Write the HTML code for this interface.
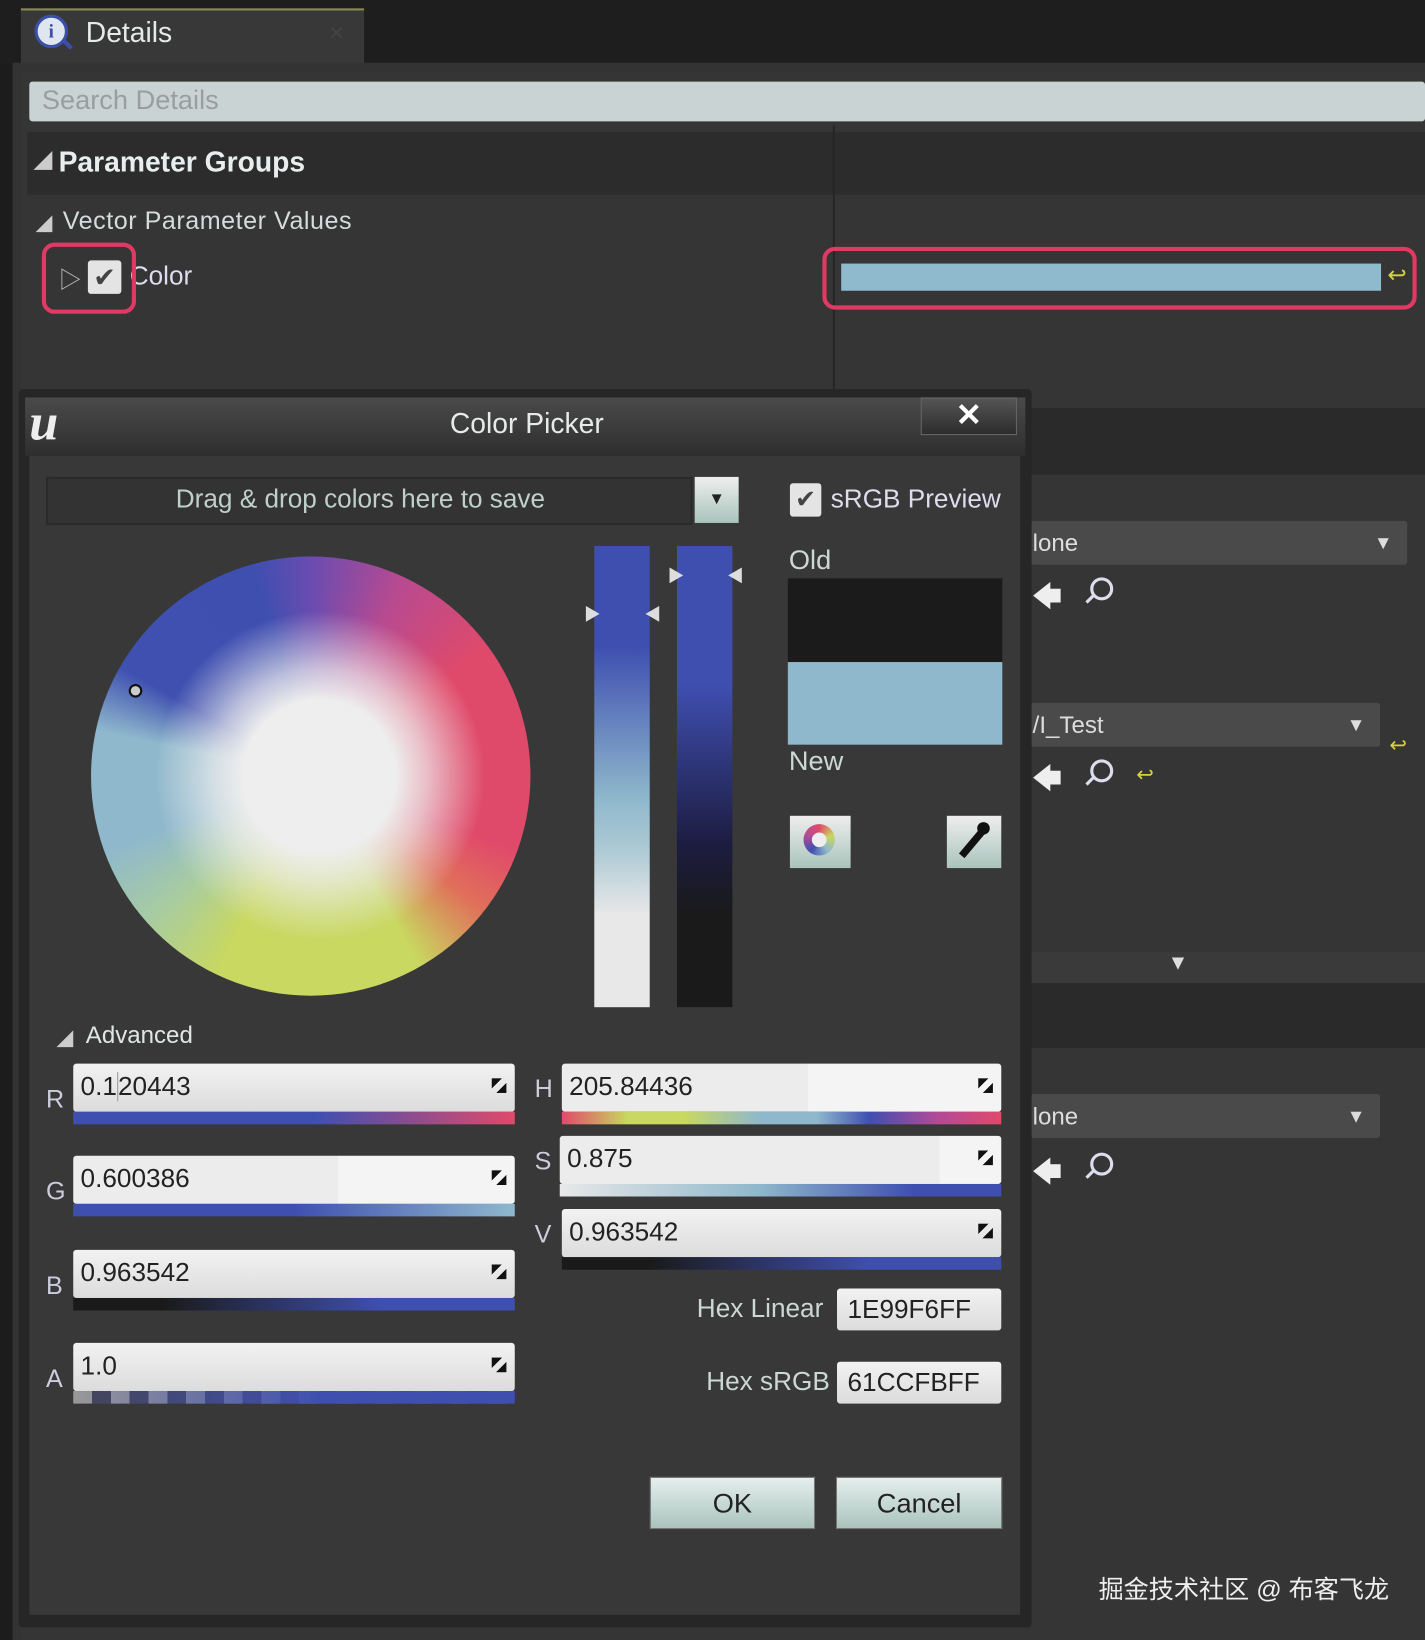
<!DOCTYPE html>
<html><head><meta charset="utf-8">
<style>
html,body{margin:0;padding:0;background:#1c1c1c;overflow:hidden;width:1425px;height:1640px}
#s{position:absolute;left:0;top:0;width:1362px;height:1568px;transform:scale(1.04626,1.0459);transform-origin:0 0;font-family:"Liberation Sans","Noto Sans CJK SC",sans-serif;color:#d8dede}
.a{position:absolute}
.t{position:absolute;white-space:nowrap}
.fld{position:absolute;background:linear-gradient(#f2f2f2,#dcdcdc);border-radius:3px;color:#222;font-size:25px;line-height:44px;padding-left:7px;box-sizing:border-box;font-stretch:condensed}
.strip{position:absolute;height:12px}
.rs{position:absolute;width:14px;height:14px;right:8px;top:14px;background:linear-gradient(135deg,#111 0 35%,transparent 35% 65%,#111 65%)}
.btn{position:absolute;background:linear-gradient(#e6eeee,#a9c4bc);border:1px solid #777;color:#222;font-size:26px;text-align:center;line-height:48px}
.dd{position:absolute;background:#4a4a4a;border-radius:3px;font-size:23px;line-height:42px;color:#ddd;padding-left:2px}
.lbl{position:absolute;font-size:24px;color:#ccd}
.mg{position:absolute;width:16px;height:16px;border:3px solid #dde;border-radius:50%}
.mg:after{content:"";position:absolute;left:-8px;top:16px;width:10px;height:3px;background:#dde;transform:rotate(-45deg)}
</style></head><body><div id="s">
<div class="a" style="left:0;top:0;width:1362px;height:62px;background:#1e1e1e"></div>
<div class="a" style="left:20px;top:8px;width:328px;height:54px;background:#383838;border-top:2px solid #8a8a50"></div>
<div class="a" style="left:33px;top:14px;width:26px;height:26px;border-radius:50%;background:#dfe6f0;border:3px solid #3b4fa8;color:#3b4fa8;font:bold 18px 'Liberation Serif',serif;text-align:center;line-height:26px">i</div>
<div class="a" style="left:58px;top:40px;width:12px;height:4px;background:#3b4fa8;transform:rotate(45deg)"></div>
<div class="t" style="left:82px;top:16px;font-size:27px;color:#e6eaea">Details</div>
<div class="t" style="left:314px;top:22px;font-size:18px;color:#444">✕</div>
<div class="a" style="left:12px;top:60px;width:1350px;height:1508px;background:#333"></div>
<div class="a" style="left:20px;top:68px;width:1342px;height:1500px;background:#353535"></div>
<div class="a" style="left:28px;top:78px;width:1334px;height:38px;background:#c9d3d3;border-radius:3px"></div>
<div class="t" style="left:40px;top:80px;font-size:26px;color:#999e9e">Search Details</div>
<div class="a" style="left:26px;top:126px;width:1336px;height:60px;background:#2c2c2c"></div>
<div class="a" style="left:796px;top:120px;width:2px;height:260px;background:#262626"></div>
<div class="t" style="left:32px;top:140px;font-size:18px;color:#ccc">◢</div>
<div class="t" style="left:56px;top:140px;font-size:27px;font-weight:bold;color:#e8eeee">Parameter Groups</div>
<div class="t" style="left:34px;top:201px;font-size:16px;color:#ccc">◢</div>
<div class="t" style="left:60px;top:198px;font-size:24px;color:#d4dcdc;letter-spacing:.5px">Vector Parameter Values</div>
<div class="t" style="left:56px;top:250px;font-size:22px;color:#bbb">▷</div>
<div class="a" style="left:84px;top:249px;width:32px;height:32px;background:#e4e4e4;border-radius:3px;color:#444;font-size:26px;text-align:center;line-height:32px">✔</div>
<div class="t" style="left:124px;top:250px;font-size:25px;color:#dde">Color</div>
<div class="a" style="left:40px;top:232px;width:82px;height:60px;border:4px solid #e03a64;border-radius:12px"></div>
<div class="a" style="left:804px;top:252px;width:516px;height:26px;background:#8fb9cc"></div>
<div class="a" style="left:786px;top:236px;width:560px;height:52px;border:4px solid #e03a64;border-radius:12px"></div>
<div class="t" style="left:1326px;top:250px;font-size:22px;color:#d8d040">↩</div>
<div class="a" style="left:975px;top:390px;width:387px;height:64px;background:#2a2a2a"></div>
<div class="dd" style="left:985px;top:498px;width:358px">lone<span style="position:absolute;right:14px;font-size:18px">▼</span></div>
<div class="t" style="left:986px;top:550px;font-size:28px;color:#eee">🡄</div>
<div class="mg" style="left:1042px;top:552px"></div>
<div class="dd" style="left:985px;top:672px;width:332px">/I_Test<span style="position:absolute;right:14px;font-size:18px">▼</span></div>
<div class="t" style="left:1328px;top:700px;font-size:20px;color:#d8d040">↩</div>
<div class="t" style="left:986px;top:724px;font-size:28px;color:#eee">🡄</div>
<div class="mg" style="left:1042px;top:726px"></div>
<div class="t" style="left:1086px;top:728px;font-size:20px;color:#d8d040">↩</div>
<div class="a" style="left:975px;top:910px;width:387px;height:30px;background:#3a3a3a"></div>
<div class="t" style="left:1116px;top:910px;font-size:20px;color:#ddd">▼</div>
<div class="a" style="left:975px;top:940px;width:387px;height:62px;background:#2a2a2a"></div>
<div class="dd" style="left:985px;top:1046px;width:332px">lone<span style="position:absolute;right:14px;font-size:18px">▼</span></div>
<div class="t" style="left:986px;top:1100px;font-size:28px;color:#eee">🡄</div>
<div class="mg" style="left:1042px;top:1102px"></div>
<div class="t" style="left:1050px;top:1500px;font-size:24px;color:#eee">掘金技术社区 @ 布客飞龙</div>
<div class="a" style="left:18px;top:372px;width:968px;height:1184px;background:#262626;border-radius:4px"></div>
<div class="a" style="left:24px;top:380px;width:956px;height:56px;background:linear-gradient(#4a4a4a,#2e2e2e)"></div>
<div class="t" style="left:28px;top:374px;font:bold 50px 'Liberation Serif',serif;color:#eee;font-style:italic">u</div>
<div class="t" style="left:430px;top:390px;font-size:27px;color:#e6eaea;font-stretch:condensed">Color Picker</div>
<div class="a" style="left:880px;top:380px;width:90px;height:34px;background:linear-gradient(#555,#2c2c2c);border:1px solid #666;color:#fff;font-size:30px;font-weight:bold;text-align:center;line-height:34px">✕</div>
<div class="a" style="left:28px;top:436px;width:947px;height:1108px;background:#383838"></div>
<div class="a" style="left:44px;top:456px;width:614px;height:42px;background:#333;border:2px solid #2a2a2a"></div>
<div class="t" style="left:168px;top:463px;font-size:25px;color:#bfd0cc">Drag &amp; drop colors here to save</div>
<div class="a" style="left:664px;top:456px;width:42px;height:44px;background:linear-gradient(#eee,#a9c4bc);color:#222;font-size:16px;text-align:center;line-height:44px">▼</div>
<div class="a" style="left:755px;top:462px;width:30px;height:32px;background:#e4e4e4;border-radius:3px;color:#444;font-size:24px;text-align:center;line-height:32px">✔</div>
<div class="t" style="left:794px;top:463px;font-size:25px;color:#dde">sRGB Preview</div>
<div class="a" style="left:87px;top:532px;width:420px;height:420px;border-radius:50%;background:conic-gradient(from 0deg,#6a4cb0 0deg,#b84a90 25deg,#e04a6a 55deg,#e04a6a 110deg,#e0705a 128deg,#c8d860 150deg,#c8d860 205deg,#a8cca0 228deg,#8fb8cc 250deg,#8fb8cc 282deg,#3f50b0 300deg,#3f4fb0 345deg,#6a4cb0 360deg)"></div>
<div class="a" style="left:87px;top:532px;width:420px;height:420px;border-radius:50%;background:radial-gradient(circle at 52% 50%,#eee 0,#eee 24%,rgba(238,238,238,.7) 34%,rgba(238,238,238,0) 52%)"></div>
<div class="a" style="left:123px;top:654px;width:9px;height:9px;border:2px solid #111;border-radius:50%;background:#ccc"></div>
<div class="a" style="left:568px;top:522px;width:53px;height:441px;background:linear-gradient(#3f4fb0 0%,#3f4fb0 22%,#8fb8cc 55%,#aac8d4 65%,#e8e8e8 80%,#e8e8e8)"></div>
<div class="a" style="left:647px;top:522px;width:53px;height:441px;background:linear-gradient(#3f4fb0 0%,#3f4fb0 30%,#1c1c40 65%,#1a1a1a 80%,#1a1a1a)"></div>
<div class="t" style="left:558px;top:574px;font-size:16px;color:#ddd">▶</div>
<div class="t" style="left:616px;top:574px;font-size:16px;color:#ddd">◀</div>
<div class="t" style="left:638px;top:537px;font-size:16px;color:#ddd">▶</div>
<div class="t" style="left:695px;top:537px;font-size:16px;color:#ddd">◀</div>
<div class="t" style="left:754px;top:520px;font-size:26px;color:#ccd8d4">Old</div>
<div class="a" style="left:753px;top:553px;width:205px;height:80px;background:#1b1b1b"></div>
<div class="a" style="left:753px;top:633px;width:205px;height:79px;background:#8fb8cc"></div>
<div class="t" style="left:754px;top:712px;font-size:26px;color:#ccd8d4">New</div>
<div class="a" style="left:755px;top:780px;width:58px;height:50px;background:linear-gradient(#eee,#a9c4bc)"></div>
<div class="a" style="left:768px;top:788px;width:30px;height:30px;border-radius:50%;background:conic-gradient(#e04a6a,#c8d860,#8fb8cc,#3f4fb0,#b04a98,#e04a6a)"></div>
<div class="a" style="left:776px;top:796px;width:14px;height:14px;border-radius:50%;background:#eee"></div>
<div class="a" style="left:905px;top:780px;width:52px;height:50px;background:linear-gradient(#eee,#a9c4bc)"></div>
<div class="a" style="left:926px;top:790px;width:7px;height:32px;background:#111;transform:rotate(40deg)"></div>
<div class="a" style="left:934px;top:786px;width:12px;height:12px;background:#111;border-radius:50%"></div>
<div class="t" style="left:54px;top:980px;font-size:16px;color:#ccc">◢</div>
<div class="t" style="left:82px;top:976px;font-size:23px;color:#e0e6e6">Advanced</div>
<div class="lbl" style="left:44px;top:1038px">R</div>
<div class="fld" style="left:70px;top:1017px;width:422px;height:46px">0.1<span style="border-left:1px solid #999"></span>20443<div class="rs"></div></div>
<div class="strip" style="left:70px;top:1063px;width:422px;background:linear-gradient(90deg,#3f4fb0 55%,#e04a6a)"></div>
<div class="lbl" style="left:44px;top:1126px">G</div>
<div class="fld" style="left:70px;top:1105px;width:422px;height:46px;background:linear-gradient(90deg,#ececec 60%,#f4f4f4 60%)">0.600386<div class="rs"></div></div>
<div class="strip" style="left:70px;top:1151px;width:422px;background:linear-gradient(90deg,#3f4fb0 50%,#8fb8cc)"></div>
<div class="lbl" style="left:44px;top:1216px">B</div>
<div class="fld" style="left:70px;top:1195px;width:422px;height:46px">0.963542<div class="rs"></div></div>
<div class="strip" style="left:70px;top:1241px;width:422px;background:linear-gradient(90deg,#1a1a1a 20%,#3f4fb0 70%)"></div>
<div class="lbl" style="left:44px;top:1305px">A</div>
<div class="fld" style="left:70px;top:1284px;width:422px;height:46px">1.0<div class="rs"></div></div>
<div class="strip" style="left:70px;top:1330px;width:422px;background:linear-gradient(90deg,rgba(63,79,176,0) 0%,#3f4fb0 55%),repeating-linear-gradient(90deg,#999 0 18px,#445 18px 36px)"></div>
<div class="lbl" style="left:511px;top:1028px">H</div>
<div class="fld" style="left:537px;top:1017px;width:420px;height:46px;background:linear-gradient(90deg,#ececec 56%,#f4f4f4 56%)">205.84436<div class="rs"></div></div>
<div class="strip" style="left:537px;top:1063px;width:420px;background:linear-gradient(90deg,#e04a6a,#c8d860 15%,#c8d860 28%,#8fb8cc 45%,#8fb8cc 58%,#3f4fb0 70%,#b04a98 85%,#e04a6a)"></div>
<div class="lbl" style="left:511px;top:1097px">S</div>
<div class="fld" style="left:535px;top:1086px;width:422px;height:46px;background:linear-gradient(90deg,#ececec 86%,#f4f4f4 86%)">0.875<div class="rs"></div></div>
<div class="strip" style="left:535px;top:1132px;width:422px;background:linear-gradient(90deg,#e8e8e8,#8fb8cc 45%,#3f4fb0 80%)"></div>
<div class="lbl" style="left:511px;top:1167px">V</div>
<div class="fld" style="left:537px;top:1156px;width:420px;height:46px">0.963542<div class="rs"></div></div>
<div class="strip" style="left:537px;top:1202px;width:420px;background:linear-gradient(90deg,#1a1a1a 20%,#3f4fb0 70%)"></div>
<div class="t" style="left:666px;top:1237px;font-size:25px;color:#ccd8d4;font-stretch:condensed">Hex Linear</div>
<div class="fld" style="left:800px;top:1232px;width:157px;height:40px;line-height:40px;font-size:25px;padding-left:10px">1E99F6FF</div>
<div class="t" style="left:675px;top:1307px;font-size:25px;color:#ccd8d4;font-stretch:condensed">Hex sRGB</div>
<div class="fld" style="left:800px;top:1302px;width:157px;height:40px;line-height:40px;font-size:25px;padding-left:10px">61CCFBFF</div>
<div class="btn" style="left:621px;top:1412px;width:156px;height:48px">OK</div>
<div class="btn" style="left:799px;top:1412px;width:157px;height:48px">Cancel</div>
</div></body></html>
